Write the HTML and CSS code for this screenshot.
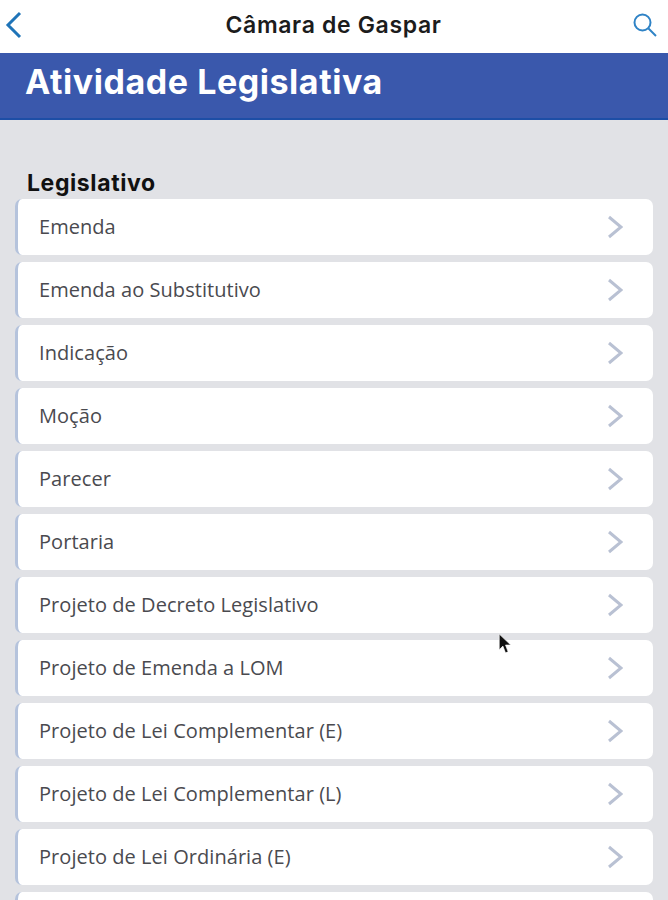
FILE: index.html
```html
<!DOCTYPE html>
<html lang="pt-BR">
<head>
    <meta charset="UTF-8">
    <meta name="viewport" content="width=device-width, initial-scale=1.0">
    <title>Câmara de Gaspar</title>
    <link rel="stylesheet" href="styles.css">
</head>
<body>
    <header class="top-bar">
        <svg class="back-icon" width="18" height="28" viewBox="0 0 18 28"><path d="M15 2 L3 14 L15 26"/></svg>
        <h1>Câmara de Gaspar</h1>
        <svg class="search-icon" width="26" height="26" viewBox="0 0 26 26"><circle cx="10.5" cy="10.5" r="8"/><path d="M16.5 16.5 L24 24"/></svg>
    </header>

    <div class="page-title">
        <h2>Atividade Legislativa</h2>
    </div>

    <main class="content">
        <h3>Legislativo</h3>
        <ul class="item-list">
            <li><span>Emenda</span><svg class="chevron" width="16" height="24" viewBox="0 0 16 24"><path d="M2 2 L14 12 L2 22"/></svg></li>
            <li><span>Emenda ao Substitutivo</span><svg class="chevron" width="16" height="24" viewBox="0 0 16 24"><path d="M2 2 L14 12 L2 22"/></svg></li>
            <li><span>Indicação</span><svg class="chevron" width="16" height="24" viewBox="0 0 16 24"><path d="M2 2 L14 12 L2 22"/></svg></li>
            <li><span>Moção</span><svg class="chevron" width="16" height="24" viewBox="0 0 16 24"><path d="M2 2 L14 12 L2 22"/></svg></li>
            <li><span>Parecer</span><svg class="chevron" width="16" height="24" viewBox="0 0 16 24"><path d="M2 2 L14 12 L2 22"/></svg></li>
            <li><span>Portaria</span><svg class="chevron" width="16" height="24" viewBox="0 0 16 24"><path d="M2 2 L14 12 L2 22"/></svg></li>
            <li><span>Projeto de Decreto Legislativo</span><svg class="chevron" width="16" height="24" viewBox="0 0 16 24"><path d="M2 2 L14 12 L2 22"/></svg></li>
            <li><span>Projeto de Emenda a LOM</span><svg class="chevron" width="16" height="24" viewBox="0 0 16 24"><path d="M2 2 L14 12 L2 22"/></svg></li>
            <li><span>Projeto de Lei Complementar (E)</span><svg class="chevron" width="16" height="24" viewBox="0 0 16 24"><path d="M2 2 L14 12 L2 22"/></svg></li>
            <li><span>Projeto de Lei Complementar (L)</span><svg class="chevron" width="16" height="24" viewBox="0 0 16 24"><path d="M2 2 L14 12 L2 22"/></svg></li>
            <li><span>Projeto de Lei Ordinária (E)</span><svg class="chevron" width="16" height="24" viewBox="0 0 16 24"><path d="M2 2 L14 12 L2 22"/></svg></li>
            <li class="cut-off"></li>
        </ul>
    </main>

    <!-- mouse pointer captured in the screenshot -->
    <svg class="cursor" width="15" height="23" viewBox="0 0 14 22"><path d="M1 1 L1 16 L4.5 12.5 L7 19 L9.5 18 L7 11.5 L12 11.5 Z"/></svg>
</body>
</html>
```

FILE: styles.css
```css
body {
    margin: 0;
    height: 900px;
    overflow: hidden;
    position: relative;
    background-color: #e1e2e6;
    font-family: "Open Sans", Arial, sans-serif;
}

.top-bar {
    height: 53px;
    background-color: white;
    display: flex;
    align-items: center;
    justify-content: space-between;
    padding: 0 10px 3px 5px;
    box-sizing: border-box;
}

.top-bar h1 {
    margin: 0 0 0 12px;
    font-family: Inter, Arial, sans-serif;
    font-size: 23px;
    font-weight: 600;
    letter-spacing: 0.65px;
    color: #1c1c1c;
}

.back-icon path {
    fill: none;
    stroke: #1f74b8;
    stroke-width: 3;
}

.search-icon circle,
.search-icon path {
    fill: none;
    stroke: #2f83c6;
    stroke-width: 2;
}

.page-title {
    height: 67px;
    box-sizing: border-box;
    background-color: #3a58ac;
    border-bottom: 2px solid #1d4ea6;
    padding-left: 25px;
}

.page-title h2 {
    margin: 0;
    font-family: Inter, Arial, sans-serif;
    font-size: 34px;
    font-weight: 700;
    letter-spacing: 0.55px;
    line-height: 57px;
    color: white;
}

.content {
    padding: 50px 15px 0 15px;
}

.content h3 {
    margin: 0 0 2px 12px;
    font-family: Inter, Arial, sans-serif;
    font-size: 23px;
    font-weight: 700;
    letter-spacing: 0.6px;
    line-height: 27px;
    color: #111;
}

.item-list {
    list-style: none;
    margin: 0;
    padding: 0;
    display: flex;
    flex-direction: column;
    gap: 7px;
}

.item-list li {
    height: 56px;
    flex-shrink: 0;
    box-sizing: border-box;
    background-color: white;
    border-radius: 7px;
    border-left: 3px solid #b5c3dc;
    display: flex;
    align-items: center;
    justify-content: space-between;
    padding: 0 30px 0 21px;
    font-size: 20px;
    letter-spacing: 0.05px;
    color: #4a4a4f;
}

.item-list li span {
    margin-bottom: 2px;
}

.item-list li.cut-off {
    height: 8px;
    border-radius: 7px 7px 0 0;
}

.chevron path {
    fill: none;
    stroke: #b9c1d3;
    stroke-width: 3;
}

.cursor {
    position: absolute;
    left: 498px;
    top: 633px;
}

.cursor path {
    fill: #111;
    stroke: #fff;
    stroke-width: 0.6;
}
```
